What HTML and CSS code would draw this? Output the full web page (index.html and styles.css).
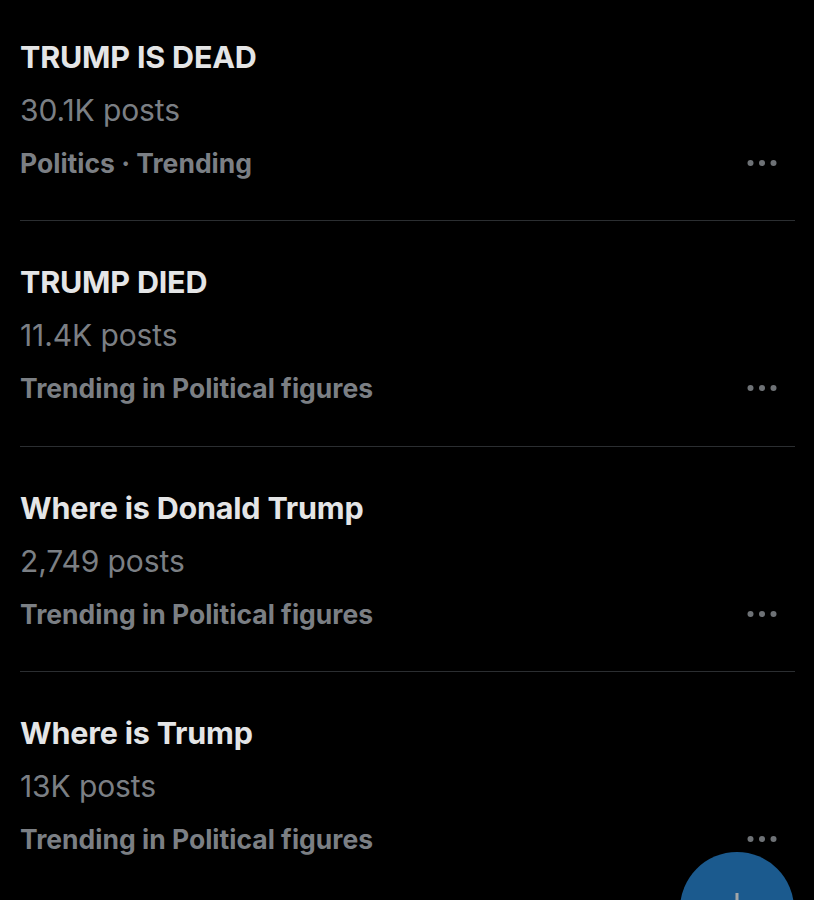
FILE: index.html
```html
<!DOCTYPE html>
<html>
<head>
<meta charset="utf-8">
<link rel="stylesheet" href="styles.css">
</head>
<body>
<div class="list">
  <div class="item">
    <div class="title">TRUMP IS DEAD</div>
    <div class="count">30.1K posts</div>
    <div class="meta-row">
      <div class="meta">Politics · Trending</div>
      <svg class="more" width="32" height="8" viewBox="0 0 32 8"><circle cx="4.5" cy="4" r="3"/><circle cx="16" cy="4" r="3"/><circle cx="27.5" cy="4" r="3"/></svg>
    </div>
  </div>
  <div class="item">
    <div class="title">TRUMP DIED</div>
    <div class="count">11.4K posts</div>
    <div class="meta-row">
      <div class="meta">Trending in Political figures</div>
      <svg class="more" width="32" height="8" viewBox="0 0 32 8"><circle cx="4.5" cy="4" r="3"/><circle cx="16" cy="4" r="3"/><circle cx="27.5" cy="4" r="3"/></svg>
    </div>
  </div>
  <div class="item">
    <div class="title">Where is Donald Trump</div>
    <div class="count">2,749 posts</div>
    <div class="meta-row">
      <div class="meta">Trending in Political figures</div>
      <svg class="more" width="32" height="8" viewBox="0 0 32 8"><circle cx="4.5" cy="4" r="3"/><circle cx="16" cy="4" r="3"/><circle cx="27.5" cy="4" r="3"/></svg>
    </div>
  </div>
  <div class="item">
    <div class="title">Where is Trump</div>
    <div class="count">13K posts</div>
    <div class="meta-row">
      <div class="meta">Trending in Political figures</div>
      <svg class="more" width="32" height="8" viewBox="0 0 32 8"><circle cx="4.5" cy="4" r="3"/><circle cx="16" cy="4" r="3"/><circle cx="27.5" cy="4" r="3"/></svg>
    </div>
  </div>
</div>
<div class="fab">
  <svg width="114" height="114" viewBox="0 0 114 114"><rect x="55.5" y="41" width="3" height="32" fill="#a3a6a8"/><rect x="41" y="55.5" width="32" height="3" fill="#a3a6a8"/></svg>
</div>
</body>
</html>
```
FILE: styles.css
```css
html, body {
  margin: 0;
  padding: 0;
  background: #000;
  height: 900px;
  overflow: hidden;
}
body {
  font-family: Inter, "Noto Sans", sans-serif;
  position: relative;
}
.list {
  margin-top: -4.5px;
}
.item {
  margin: 0 19px 0 20px;
  padding: 35px 0 31.5px;
  border-bottom: 1px solid #2b2e31;
}
.item:last-child {
  border-bottom: none;
}
.title {
  font-size: 30.5px;
  font-weight: 700;
  line-height: 52px;
  color: #e4e5e6;
  letter-spacing: -0.2px;
}
.count {
  font-size: 30px;
  font-weight: 400;
  line-height: 54px;
  color: #7b7f84;
  letter-spacing: -0.1px;
}
.meta-row {
  display: flex;
  align-items: center;
  justify-content: space-between;
  height: 52px;
}
.meta {
  font-size: 26.5px;
  font-weight: 700;
  color: #7b7f84;
}
.more {
  fill: #6e7276;
  margin-right: 17.5px;
}
.fab {
  position: absolute;
  left: 680px;
  top: 852px;
  width: 114px;
  height: 114px;
  border-radius: 50%;
  background: #1b5a8e;
}
.fab svg {
  display: block;
}
```
